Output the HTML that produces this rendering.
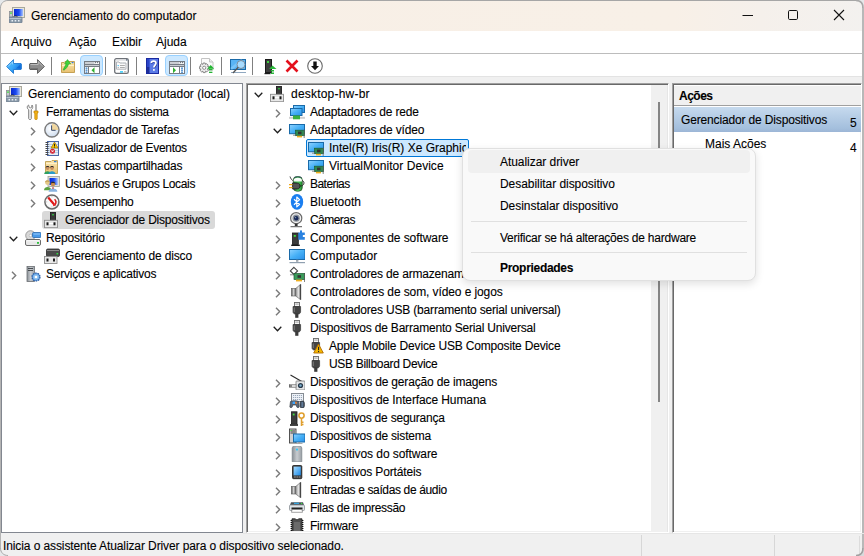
<!DOCTYPE html>
<html><head><meta charset="utf-8"><style>
*{box-sizing:border-box}
html,body{margin:0;padding:0}
body{width:864px;height:556px;overflow:hidden;position:relative;background:#f0f0f0;font-family:"Liberation Sans",sans-serif;font-size:12px;color:#000}
.a{position:absolute;display:block}
.t{position:absolute;white-space:nowrap;line-height:18px;height:18px;-webkit-text-stroke:0.1px #000}
</style></head><body>

<svg width="0" height="0" style="position:absolute">
<defs>
<linearGradient id="gScreen" x1="0" y1="0" x2="1" y2="1"><stop offset="0" stop-color="#8fd2ff"/><stop offset="0.5" stop-color="#46b0f6"/><stop offset="1" stop-color="#2a8ee8"/></linearGradient>
<linearGradient id="gDeepScreen" x1="0" y1="0" x2="1" y2="0"><stop offset="0" stop-color="#0a2ad0"/><stop offset="0.55" stop-color="#1a4af0"/><stop offset="1" stop-color="#a8c4ff"/></linearGradient>
<linearGradient id="gGray" x1="0" y1="0" x2="1" y2="0"><stop offset="0" stop-color="#8a9096"/><stop offset="0.5" stop-color="#c8ccd0"/><stop offset="1" stop-color="#9aa0a6"/></linearGradient>
<linearGradient id="gSpeaker" x1="0" y1="0" x2="1" y2="0"><stop offset="0" stop-color="#4a4a4a"/><stop offset="0.45" stop-color="#d4d4d4"/><stop offset="1" stop-color="#6a6a6a"/></linearGradient><linearGradient id="gCone" x1="0" y1="0" x2="1" y2="0"><stop offset="0" stop-color="#9a9a9a"/><stop offset="0.6" stop-color="#e8e8e8"/><stop offset="1" stop-color="#707070"/></linearGradient>
<linearGradient id="gBlue" x1="0" y1="0" x2="1" y2="1"><stop offset="0" stop-color="#a8dcff"/><stop offset="1" stop-color="#1a8ae8"/></linearGradient>
<linearGradient id="gFolder" x1="0" y1="0" x2="0" y2="1"><stop offset="0" stop-color="#fbe7b0"/><stop offset="1" stop-color="#e8c070"/></linearGradient>
<linearGradient id="gArrowB" x1="0" y1="0" x2="1" y2="0.6"><stop offset="0" stop-color="#5ac0ff"/><stop offset="0.55" stop-color="#3aa8f8"/><stop offset="1" stop-color="#1070e0"/></linearGradient>
<linearGradient id="gArrowG" x1="0" y1="0" x2="0" y2="1"><stop offset="0" stop-color="#b0b0b0"/><stop offset="1" stop-color="#6a6a6a"/></linearGradient>
<radialGradient id="gClock" cx="0.4" cy="0.4" r="0.7"><stop offset="0" stop-color="#ffffff"/><stop offset="1" stop-color="#c8d8ec"/></radialGradient>
<linearGradient id="gBatt" x1="0" y1="0" x2="1" y2="0"><stop offset="0" stop-color="#1a8a2a"/><stop offset="0.5" stop-color="#5ad86a"/><stop offset="1" stop-color="#1a8a2a"/></linearGradient>
</defs></svg>
<div class="a" style="left:0;top:0;width:864px;height:31px;background:linear-gradient(90deg,#f8efe6 0%,#f8f0e7 78%,#f5f0eb 88%,#f3f1ef 100%)"></div>
<div class="a" style="left:0;top:0;width:864px;height:1px;background:#a6a6a6"></div>
<svg class="a" style="left:9px;top:7px" width="16" height="16" viewBox="0 0 16 16">
<rect x="3.5" y="0.5" width="12" height="10" fill="#e8e6dc" stroke="#a8a89c"/>
<rect x="5" y="2" width="9" height="7" fill="url(#gDeepScreen)"/>
<rect x="0.5" y="4.5" width="3" height="6" fill="#c4c8cc" stroke="#8a8e92" stroke-width="0.8"/>
<rect x="1" y="5.5" width="2" height="1.2" fill="#40e040"/>
<path d="M4 10.5 C5 8.5 8 8.5 9 10.5" fill="none" stroke="#222" stroke-width="1"/>
<rect x="0" y="10" width="13" height="6" rx="1" fill="#8a9aaa" stroke="#6a7a8a" stroke-width="0.8"/>
<path d="M0.5 11.5 H12.5" stroke="#b8c4d0" stroke-width="1"/>
<rect x="2.5" y="13" width="1.5" height="1.5" fill="#e8eef4"/><rect x="5.7" y="13" width="1.5" height="1.5" fill="#e8eef4"/><rect x="9" y="13" width="1.5" height="1.5" fill="#e8eef4"/>
</svg>
<div class="t" style="left:31px;top:7px">Gerenciamento do computador</div>
<svg class="a" style="left:740px;top:8px" width="110" height="16" viewBox="0 0 110 16"><line x1="2.5" y1="7.5" x2="13" y2="7.5" stroke="#111" stroke-width="1"/><rect x="48.5" y="2.5" width="9" height="9" rx="1.2" fill="none" stroke="#111" stroke-width="1"/><path d="M94 2 L104 12 M104 2 L94 12" stroke="#111" stroke-width="1.1"/></svg>
<div class="a" style="left:0;top:31px;width:864px;height:22px;background:#fff"></div>
<div class="a" style="left:0;top:53px;width:864px;height:1px;background:#bcbcbc"></div>
<div class="t" style="left:11px;top:33px">Arquivo</div>
<div class="t" style="left:69px;top:33px">Ação</div>
<div class="t" style="left:112px;top:33px">Exibir</div>
<div class="t" style="left:156px;top:33px">Ajuda</div>
<div class="a" style="left:0;top:54px;width:864px;height:22px;background:#fff"></div>
<div class="a" style="left:0;top:76px;width:864px;height:1px;background:#e3e3e3"></div>
<div class="a" style="left:80px;top:55px;width:23px;height:21px;background:#cce8ff;border:1px solid #99d1ff;border-radius:4px"></div>
<div class="a" style="left:165px;top:55px;width:23px;height:21px;background:#cce8ff;border:1px solid #99d1ff;border-radius:4px"></div>
<div class="a" style="left:51px;top:57px;width:1px;height:18px;background:#808080"></div>
<div class="a" style="left:105px;top:57px;width:1px;height:18px;background:#808080"></div>
<div class="a" style="left:136px;top:57px;width:1px;height:18px;background:#808080"></div>
<div class="a" style="left:190px;top:57px;width:1px;height:18px;background:#808080"></div>
<div class="a" style="left:221px;top:57px;width:1px;height:18px;background:#808080"></div>
<div class="a" style="left:252px;top:57px;width:1px;height:18px;background:#808080"></div>
<svg class="a" style="left:6px;top:59px" width="16" height="15" viewBox="0 0 16 15">
<path d="M0.6 7.5 L7.5 0.6 V4.5 H15 L15.4 5 V10 L15 10.5 H7.5 V14.4Z" fill="url(#gArrowB)" stroke="#1e78d0" stroke-width="0.9" stroke-linejoin="round"/>
<path d="M2 7.5 L6.6 2.8 V5.4" fill="none" stroke="#a8e0ff" stroke-width="0.8"/>
<path d="M10 9.6 H14.4 V5.6 Z" fill="#0a62d0" opacity="0.8"/>
</svg>
<svg class="a" style="left:29px;top:59px" width="16" height="15" viewBox="0 0 16 15">
<path d="M15.4 7.5 L8.5 0.6 V4.5 H1 L0.6 5 V10 L1 10.5 H8.5 V14.4Z" fill="#8e8e8e" stroke="#555" stroke-width="0.9" stroke-linejoin="round"/>
<path d="M1.5 5.5 H9.2 V2.6 L14 7.5" fill="none" stroke="#c8c8c8" stroke-width="0.8"/>
<path d="M1.5 9.5 H9" stroke="#6e6e6e" stroke-width="0.8"/>
</svg>
<svg class="a" style="left:61px;top:59px" width="14" height="15" viewBox="0 0 14 15">
<path d="M0.5 3.5 H3 L4 2.5 H13.5 V13.5 H0.5Z" fill="url(#gFolder)" stroke="#c09a48" stroke-width="0.9"/>
<path d="M1 6.5 H13" stroke="#fff2c8" stroke-width="1"/>
<rect x="10.5" y="3" width="2.2" height="1.2" rx="0.6" fill="#3a80e0"/>
<path d="M2.2 10.8 C3.2 8.5 4.5 6.5 5.2 4.6 L3.6 4.4 L6.5 0.6 L9.6 4.8 L7.6 4.8 C7 7.5 5 9.8 3 11.2Z" fill="#3ed33a" stroke="#22a020" stroke-width="0.6" stroke-linejoin="round"/>
</svg>
<svg class="a" style="left:84px;top:61px" width="16" height="14" viewBox="0 0 16 14">
<rect x="0.5" y="0.5" width="15" height="12" fill="#fff" stroke="#767c84"/>
<rect x="1" y="1" width="14" height="2" fill="#fff"/>
<rect x="1" y="1.5" width="9.5" height="1" fill="#9aa0a8"/>
<rect x="11" y="1" width="1.2" height="1.2" fill="#767c84"/><rect x="13" y="1" width="1.2" height="1.2" fill="#767c84"/>
<rect x="1" y="3" width="14" height="1" fill="#767c84"/>
<rect x="1" y="4" width="14" height="1" fill="#c8ccd2"/>
<rect x="1" y="5" width="14" height="1" fill="#767c84"/>
<rect x="4" y="6" width="1" height="7" fill="#767c84"/>
<rect x="1.5" y="6.6" width="2" height="1.1" rx="0.5" fill="#2a7ac8"/><rect x="1.5" y="8.6" width="2" height="1.1" rx="0.5" fill="#2a7ac8"/><rect x="1.5" y="10.6" width="2" height="1.1" rx="0.5" fill="#2a7ac8"/>
<path d="M7.5 9.2 L10.5 6.2 V12.2Z" fill="#30b030"/>
</svg>
<svg class="a" style="left:114px;top:58px" width="15" height="16" viewBox="0 0 15 16">
<rect x="0.7" y="0.7" width="13.6" height="14.6" rx="1.6" fill="#fff" stroke="#6e7278" stroke-width="1.3"/>
<rect x="1.5" y="1.6" width="11" height="1" fill="#d8dadc"/>
<rect x="12" y="1.2" width="1.4" height="1.4" fill="#5a6a80"/>
<path d="M2.5 4 H5 L5.8 5 H12 V11.2 H2.5Z" fill="#fafafa" stroke="#a8acb2" stroke-width="0.9"/>
<rect x="6.2" y="4.6" width="1.8" height="0.9" fill="#c8ccd0"/><rect x="9" y="4.6" width="1.8" height="0.9" fill="#c8ccd0"/>
<circle cx="4.2" cy="7.6" r="0.7" fill="#20b8f8"/><circle cx="4.2" cy="9.6" r="0.6" fill="#999"/>
<rect x="6" y="7.2" width="4.8" height="0.8" fill="#9a9a9a"/><rect x="6" y="9.2" width="4.8" height="0.8" fill="#9a9a9a"/>
<rect x="6" y="13.2" width="3" height="1.4" fill="#28c8f8"/>
<rect x="10" y="13.2" width="2.5" height="1.2" fill="#b8b8b8"/>
</svg>
<svg class="a" style="left:146px;top:58px" width="13" height="16" viewBox="0 0 13 16">
<rect x="0.5" y="0.5" width="12" height="15" fill="#3050d0" stroke="#1a2aa0"/>
<rect x="1" y="1" width="2.6" height="9" fill="#2a44c8"/>
<rect x="1" y="9" width="2.6" height="6" fill="#1e2e98"/>
<rect x="3.6" y="1" width="8.4" height="14" fill="#5a7ae6"/>
<path d="M5.3 5 C5.3 2.4 10 2.4 10 5 C10 7 7.9 7.2 7.9 9.6" fill="none" stroke="#2a3a90" stroke-width="1.7" transform="translate(0.5 0.5)"/>
<path d="M5.3 5 C5.3 2.4 10 2.4 10 5 C10 7 7.9 7.2 7.9 9.6" fill="none" stroke="#fff" stroke-width="1.7"/>
<rect x="7" y="11" width="1.8" height="1.8" rx="0.5" fill="#fff"/>
</svg>
<svg class="a" style="left:169px;top:61px" width="16" height="14" viewBox="0 0 16 14">
<rect x="0.5" y="0.5" width="15" height="12" fill="#fff" stroke="#767c84"/>
<rect x="1" y="1" width="14" height="2" fill="#fff"/>
<rect x="1" y="1.5" width="9.5" height="1" fill="#9aa0a8"/>
<rect x="11" y="1" width="1.2" height="1.2" fill="#767c84"/><rect x="13" y="1" width="1.2" height="1.2" fill="#767c84"/>
<rect x="1" y="3" width="14" height="1" fill="#767c84"/>
<rect x="1" y="4" width="14" height="1" fill="#c8ccd2"/>
<rect x="1" y="5" width="14" height="1" fill="#767c84"/>
<rect x="10" y="6" width="1" height="7" fill="#767c84"/>
<rect x="12" y="6.6" width="2" height="1.1" rx="0.5" fill="#2a7ac8"/><rect x="12" y="8.6" width="2" height="1.1" rx="0.5" fill="#2a7ac8"/><rect x="12" y="10.6" width="2" height="1.1" rx="0.5" fill="#2a7ac8"/>
<path d="M4 6.2 L7 9.2 L4 12.2Z" fill="#30b030"/>
</svg>
<svg class="a" style="left:199px;top:58px" width="16" height="16" viewBox="0 0 16 16">
<path d="M2.5 0.5 H10.5 L14 4 V12 H2.5Z" fill="#fbfbfb" stroke="#c4c4c4"/>
<path d="M10.5 0.5 V4 H14" fill="#eee" stroke="#c4c4c4"/>
<g transform="translate(5.2 10)">
<path d="M-1 -5 H1 L1.3 -3.6 L2.6 -4.3 L4 -2.9 L3.3 -1.6 L4.8 -1.3 V0.8 L3.3 1.1 L4 2.5 L2.6 3.9 L1.3 3.2 L1 4.6 H-1 L-1.3 3.2 L-2.6 3.9 L-4 2.5 L-3.3 1.1 L-4.8 0.8 V-1.3 L-3.3 -1.6 L-4 -2.9 L-2.6 -4.3 L-1.3 -3.6Z" fill="#ececec" stroke="#7a7a7a" stroke-width="0.9" stroke-linejoin="round"/>
<circle cx="0" cy="-0.2" r="1.6" fill="#fff" stroke="#7a7a7a" stroke-width="0.8"/>
</g>
<path d="M8.2 10.8 L11.7 7 L15.2 10.8Z" fill="#22b432"/>
<rect x="10" y="11" width="3.4" height="1.3" fill="#22b432"/>
<rect x="10" y="13.7" width="3.4" height="1.3" fill="#22b432"/>
</svg>
<svg class="a" style="left:230px;top:59px" width="16" height="15" viewBox="0 0 16 15">
<rect x="0.5" y="0.5" width="15" height="10" fill="#5ab4f4" stroke="#1a6aa8"/>
<path d="M1 10 L12 1" stroke="#9ad6ff" stroke-width="2.5" opacity="0.5"/>
<rect x="1" y="13" width="15" height="1" fill="#90a8c0"/>
<circle cx="11" cy="5.5" r="4" fill="#a8dcff" stroke="#7a8a9a" stroke-width="1"/>
<path d="M8.2 8.3 L3 14" stroke="#555" stroke-width="1.3"/>
</svg>
<svg class="a" style="left:264px;top:59px" width="13" height="16" viewBox="0 0 13 16">
<rect x="1.5" y="0.5" width="6" height="13" fill="#3c3c3c" stroke="#1a1a1a"/>
<rect x="3" y="2" width="2" height="2" fill="#40d040"/>
<rect x="0.5" y="14" width="6" height="1.2" fill="#1a1a1a"/>
<path d="M5 10 L8.5 6.5 L12.5 10Z" fill="#2ab83a"/>
<rect x="7" y="11" width="3" height="1.5" fill="#2ab83a"/>
<rect x="7" y="13.5" width="3" height="1.5" fill="#2ab83a"/>
</svg>
<svg class="a" style="left:285px;top:59px" width="14" height="14" viewBox="0 0 14 14">
<path d="M1.5 1.5 L12.5 12.5 M12.5 1.5 L1.5 12.5" stroke="#e4101c" stroke-width="2.6"/>
</svg>
<svg class="a" style="left:307px;top:58px" width="16" height="16" viewBox="0 0 16 16">
<circle cx="8" cy="8" r="7.3" fill="#fff" stroke="#6a6a6a" stroke-width="1.1"/>
<path d="M6.3 3.5 H9.7 V8 H12 L8 12.3 L4 8 H6.3Z" fill="#111"/>
</svg>
<div class="a" style="left:1px;top:83px;width:242px;height:450px;background:#fff;border:1px solid #828790"></div>
<div class="a" style="left:246px;top:83px;width:423px;height:450px;background:#fff;border-top:1px solid #a0a0a0;border-left:1px solid #a0a0a0;border-right:1px solid #fff;border-bottom:1px solid #fff;box-shadow:inset 1px 1px 0 #696969, inset -1px 0 0 #e6e6e6, inset 0 -1px 0 #f0f0f0"></div>
<div class="a" style="left:651px;top:85px;width:16px;height:446px;background:#f0f0f0"></div>
<div class="a" style="left:658px;top:102px;width:2px;height:300px;background:#858585"></div>
<div class="a" style="left:672px;top:83px;width:190px;height:450px;background:#fff;border-top:1px solid #a0a0a0;border-left:1px solid #a0a0a0;border-right:1px solid #fff;border-bottom:1px solid #fff;box-shadow:inset 1px 1px 0 #696969, inset -1px -1px 0 #f0f0f0"></div>
<div class="a" style="left:674px;top:85px;width:187px;height:20px;background:#f0f0f0;border-top:1px solid #fff"></div>
<div class="a" style="left:674px;top:105px;width:187px;height:1px;background:#a0a0a0"></div>
<div class="a" style="left:674px;top:106px;width:187px;height:1px;background:#fff"></div>
<div class="a" style="left:674px;top:107px;width:187px;height:25px;background:linear-gradient(#c6daee,#a4bfdd 85%,#9cb6d6)"></div>
<div class="t" style="left:679px;top:87px;font-weight:bold;letter-spacing:-0.5px">Ações</div>
<div class="t" style="left:681px;top:111px;letter-spacing:-0.15px">Gerenciador de Dispositivos</div>
<div class="t" style="left:850px;top:114px">5</div>
<div class="t" style="left:705px;top:135px">Mais Ações</div>
<div class="t" style="left:850px;top:139px">4</div>
<div class="a" style="left:862px;top:0;width:2px;height:556px;background:#b8b8b8"></div>
<div class="a" style="left:0;top:0;width:1px;height:556px;background:#b4b4b4"></div>
<div class="a" style="left:859px;top:536px;width:1px;height:20px;background:#dcdcdc"></div>
<svg class="a" style="left:0;top:0" width="8" height="8"><path d="M0 0 H8 V0.5 C3.5 0.5 0.5 3.5 0.5 8 H0Z" fill="#e6e8ea"/><path d="M0.5 8 C0.5 3.5 3.5 0.5 8 0.5" fill="none" stroke="#a8a8a8" stroke-width="1"/></svg>
<svg class="a" style="left:856px;top:0" width="8" height="8"><path d="M8 0 H0 V0.5 C4.5 0.5 7 3.5 7 8 H8Z" fill="#e6e8ea"/><path d="M0 0.5 C4.5 0.5 7 3.5 7 8" fill="none" stroke="#a8a8a8" stroke-width="1.6"/></svg>
<svg class="a" style="left:0;top:548px" width="8" height="8"><path d="M0 8 H8 V7.5 C3.5 7.5 0.5 4.5 0.5 0 H0Z" fill="#e6e8ea"/><path d="M0.5 0 C0.5 4.5 3.5 7.5 8 7.5" fill="none" stroke="#a8a8a8" stroke-width="1"/></svg>
<svg class="a" style="left:856px;top:548px" width="8" height="8"><path d="M8 8 H0 V7.5 C4.5 7.5 7 4.5 7 0 H8Z" fill="#d8dadc"/><path d="M0 7.5 C4.5 7.5 7 4.5 7 0" fill="none" stroke="#a0a0a0" stroke-width="1.6"/></svg>
<div class="a" style="left:243px;top:533px;width:621px;height:1px;background:#e6e6e6"></div>
<div class="a" style="left:641px;top:535px;width:1px;height:21px;background:#d7d7d7"></div>
<div class="a" style="left:774px;top:535px;width:1px;height:21px;background:#d7d7d7"></div>
<div class="t" style="left:3px;top:537px;letter-spacing:-0.1px">Inicia o assistente Atualizar Driver para o dispositivo selecionado.</div>
<div class="a" style="left:42px;top:211px;width:173px;height:18px;background:#d9d9d9;border-radius:3px"></div>
<svg class="a" style="left:6px;top:86px" width="16" height="16" viewBox="0 0 16 16">
<rect x="3.5" y="0.5" width="12" height="10" fill="#e8e6dc" stroke="#a8a89c"/>
<rect x="5" y="2" width="9" height="7" fill="url(#gDeepScreen)"/>
<rect x="0.5" y="4.5" width="3" height="6" fill="#c4c8cc" stroke="#8a8e92" stroke-width="0.8"/>
<rect x="1" y="5.5" width="2" height="1.2" fill="#40e040"/>
<path d="M4 10.5 C5 8.5 8 8.5 9 10.5" fill="none" stroke="#222" stroke-width="1"/>
<rect x="0" y="10" width="13" height="6" rx="1" fill="#8a9aaa" stroke="#6a7a8a" stroke-width="0.8"/>
<path d="M0.5 11.5 H12.5" stroke="#b8c4d0" stroke-width="1"/>
<rect x="2.5" y="13" width="1.5" height="1.5" fill="#e8eef4"/><rect x="5.7" y="13" width="1.5" height="1.5" fill="#e8eef4"/><rect x="9" y="13" width="1.5" height="1.5" fill="#e8eef4"/>
</svg>
<div class="t" style="left:28px;top:85px;letter-spacing:0.017px">Gerenciamento do computador (local)</div>
<svg class="a" style="left:9.0px;top:110px" width="9" height="6" viewBox="0 0 9 6"><path d="M0.7 0.8 L4.5 4.7 L8.3 0.8" fill="none" stroke="#202020" stroke-width="1.3"/></svg>
<svg class="a" style="left:25px;top:104px" width="16" height="16" viewBox="0 0 16 16">
<path d="M3.6 1 C2 1.6 1.7 4 3 5.2 L3.6 5.6 V14.6 C3.6 15.8 6.4 15.8 6.4 14.6 V5.6 C7.9 4.8 8.2 2.3 7 1 L6.6 3.4 L5.4 3.8 L4.2 3.3 Z" fill="#f6f6f6" stroke="#7e7e7e" stroke-width="0.9" stroke-linejoin="round"/>
<path d="M5 6.2 V14.2" stroke="#c4c4c4" stroke-width="0.9"/>
<rect x="10.4" y="0.2" width="1.2" height="7" fill="#7e7e7e"/>
<path d="M9 7 H13 V9 H12.2 V14.8 C12.2 16 9.8 16 9.8 14.8 V9 H9Z" fill="#f2b418" stroke="#c08000" stroke-width="0.7"/>
</svg>
<div class="t" style="left:46px;top:103px;letter-spacing:-0.303px">Ferramentas do sistema</div>
<svg class="a" style="left:30.0px;top:126.5px" width="6" height="9" viewBox="0 0 6 9"><path d="M1 0.7 L4.7 4.5 L1 8.3" fill="none" stroke="#7a7a7a" stroke-width="1.4"/></svg>
<svg class="a" style="left:44px;top:122px" width="16" height="16" viewBox="0 0 16 16">
<circle cx="7.9" cy="7.9" r="7.1" fill="url(#gClock)" stroke="#7a7a7a" stroke-width="1.4"/>
<path d="M7.9 1.6 A6.3 6.3 0 0 1 14.2 7.9 L7.9 7.9Z" fill="#f2d494" opacity="0.9"/>
<path d="M7.6 3.4 V8.3 H11.6" fill="none" stroke="#3a4a6a" stroke-width="1"/>
</svg>
<div class="t" style="left:65px;top:121px;letter-spacing:-0.193px">Agendador de Tarefas</div>
<svg class="a" style="left:30.0px;top:144.5px" width="6" height="9" viewBox="0 0 6 9"><path d="M1 0.7 L4.7 4.5 L1 8.3" fill="none" stroke="#7a7a7a" stroke-width="1.4"/></svg>
<svg class="a" style="left:44px;top:140px" width="16" height="16" viewBox="0 0 16 16">
<rect x="3.5" y="1.5" width="11" height="14" fill="#e4ecf6" stroke="#4a68a8"/>
<path d="M4 4.5h10M4 6.5h10M4 8.5h10M4 10.5h10M4 12.5h10" stroke="#b8cce4" stroke-width="1"/>
<rect x="1.5" y="2" width="3" height="1" fill="#444"/><rect x="1.5" y="4" width="3" height="1" fill="#444"/><rect x="1.5" y="6" width="3" height="1" fill="#444"/><rect x="1.5" y="8" width="3" height="1" fill="#444"/><rect x="1.5" y="10" width="3" height="1" fill="#444"/><rect x="1.5" y="12" width="3" height="1" fill="#444"/><rect x="1.5" y="14" width="3" height="1" fill="#444"/>
<path d="M10.5 2 L14 8 H7Z" fill="#f8c800" stroke="#a07000" stroke-width="0.7" stroke-linejoin="round"/>
<rect x="10" y="3.8" width="1" height="2.4" fill="#222"/><rect x="10" y="6.6" width="1" height="0.9" fill="#222"/>
<circle cx="8.5" cy="11.2" r="2.5" fill="#d42030"/>
<path d="M7.5 10.2l2 2M9.5 10.2l-2 2" stroke="#fff" stroke-width="0.9"/>
</svg>
<div class="t" style="left:65px;top:139px;letter-spacing:-0.292px">Visualizador de Eventos</div>
<svg class="a" style="left:30.0px;top:162.5px" width="6" height="9" viewBox="0 0 6 9"><path d="M1 0.7 L4.7 4.5 L1 8.3" fill="none" stroke="#7a7a7a" stroke-width="1.4"/></svg>
<svg class="a" style="left:44px;top:158px" width="16" height="16" viewBox="0 0 16 16">
<path d="M1.5 3.5 H7 L8 2.5 H13.5 V15.5 H1.5Z" fill="url(#gFolder)" stroke="#c0a050" stroke-width="0.9"/>
<path d="M2 5.5 H13" stroke="#fff0c8" stroke-width="1"/>
<rect x="10" y="3" width="2.5" height="1.2" fill="#3a80d0"/>
<circle cx="3.6" cy="10" r="1.9" fill="#c89060"/><path d="M1.6 9.8 C1.6 7.4 5.6 7.4 5.6 9.8 C5 8.8 2.2 8.8 1.6 9.8Z" fill="#2a2a2a"/>
<path d="M0.2 16 C0.2 12.2 7 12.2 7 16Z" fill="#30a060"/>
<circle cx="8" cy="10" r="1.9" fill="#c89060"/><path d="M6 9.8 C6 7.4 10 7.4 10 9.8 C9.4 8.8 6.6 8.8 6 9.8Z" fill="#2a2a2a"/>
<path d="M4.6 16 C4.6 12.2 11.4 12.2 11.4 16Z" fill="#2a9ac8"/>
</svg>
<div class="t" style="left:65px;top:157px;letter-spacing:-0.194px">Pastas compartilhadas</div>
<svg class="a" style="left:30.0px;top:180.5px" width="6" height="9" viewBox="0 0 6 9"><path d="M1 0.7 L4.7 4.5 L1 8.3" fill="none" stroke="#7a7a7a" stroke-width="1.4"/></svg>
<svg class="a" style="left:44px;top:176px" width="16" height="16" viewBox="0 0 16 16">
<rect x="4" y="0.5" width="11.4" height="10" fill="#e0e0d8" stroke="#a0a098" stroke-width="0.8"/>
<rect x="5.5" y="2" width="8.4" height="7" fill="url(#gDeepScreen)"/>
<circle cx="3.4" cy="6.6" r="2.3" fill="#e4c888"/><path d="M1.1 6.4 C1.2 3.8 5.6 3.8 5.7 6.4 C5 5.2 1.8 5.2 1.1 6.4Z" fill="#b89040"/>
<path d="M0 14.2 C0 10 7.2 10 7.2 14.2Z" fill="#5aa040"/>
<circle cx="9" cy="8" r="2.3" fill="#c88c50"/><path d="M6.7 7.8 C6.8 5.2 11.2 5.2 11.3 7.8 C10.6 6.6 7.4 6.6 6.7 7.8Z" fill="#2a2a2a"/>
<path d="M4.6 15.8 C4.6 11.4 13.4 11.4 13.4 15.8Z" fill="#8ab4e0"/>
<path d="M9 11 V13" stroke="#c02020" stroke-width="1"/>
</svg>
<div class="t" style="left:65px;top:175px;letter-spacing:-0.332px">Usuários e Grupos Locais</div>
<svg class="a" style="left:30.0px;top:198.5px" width="6" height="9" viewBox="0 0 6 9"><path d="M1 0.7 L4.7 4.5 L1 8.3" fill="none" stroke="#7a7a7a" stroke-width="1.4"/></svg>
<svg class="a" style="left:44px;top:194px" width="16" height="16" viewBox="0 0 16 16">
<circle cx="7.9" cy="7.9" r="7" fill="#fafafa" stroke="#6a6a6a" stroke-width="1.5"/>
<path d="M3.2 7.9 H2.4M4.3 4.3 L3.7 3.7M7.9 3.2 V2.4M13.4 7.9 H12.6M11.5 11.5 L12.1 12.1M7.9 12.6 V13.4" stroke="#888" stroke-width="0.7"/>
<path d="M4.2 3.6 L10.2 10.4" stroke="#e01818" stroke-width="2.2"/>
<path d="M10.6 5.2 C12 6.6 12.2 9 11 10.8 L9.2 11.6" fill="none" stroke="#e01818" stroke-width="1.5"/>
</svg>
<div class="t" style="left:65px;top:193px;letter-spacing:-0.292px">Desempenho</div>
<svg class="a" style="left:44px;top:212px" width="16" height="16" viewBox="0 0 16 16">
<rect x="6.5" y="0.5" width="5" height="8" fill="#3a3a3a" stroke="#1e1e1e" stroke-width="0.9"/>
<rect x="8.3" y="2" width="1.4" height="1.4" fill="#30e040"/>
<rect x="0.5" y="8.3" width="13" height="7.4" fill="#e8e8e8" stroke="#8e8e8e" stroke-width="0.9"/>
<rect x="2.5" y="10.3" width="2" height="3" fill="#1a1a1a"/>
<rect x="9.5" y="10.3" width="2" height="3" fill="#1a1a1a"/>
<path d="M5 11.5 H9" stroke="#fff" stroke-width="1"/>
</svg>
<div class="t" style="left:65px;top:211px;letter-spacing:-0.195px">Gerenciador de Dispositivos</div>
<svg class="a" style="left:9.0px;top:236px" width="9" height="6" viewBox="0 0 9 6"><path d="M0.7 0.8 L4.5 4.7 L8.3 0.8" fill="none" stroke="#202020" stroke-width="1.3"/></svg>
<svg class="a" style="left:25px;top:230px" width="16" height="16" viewBox="0 0 16 16">
<circle cx="5.5" cy="5.5" r="4.8" fill="#d8d8d8" stroke="#8a8a8a" stroke-width="0.8"/>
<circle cx="5.5" cy="5.5" r="1.3" fill="#fff" stroke="#999" stroke-width="0.5"/>
<rect x="7.5" y="2.5" width="8.5" height="5" rx="1" fill="#4a9ae8" stroke="#2a6ab0" stroke-width="0.8"/>
<path d="M8.5 4 H15" stroke="#a8d4ff" stroke-width="0.8"/>
<rect x="0.5" y="9.5" width="15" height="6" rx="1.5" fill="#e8e8e8" stroke="#6a6a6a"/>
<path d="M1 10.8 H15" stroke="#fff" stroke-width="0.8"/>
<rect x="12" y="12" width="2" height="1.8" fill="#30c040"/>
</svg>
<div class="t" style="left:46px;top:229px;letter-spacing:-0.174px">Repositório</div>
<svg class="a" style="left:44px;top:248px" width="16" height="16" viewBox="0 0 16 16">
<rect x="2.5" y="1" width="13" height="7.5" rx="1.2" fill="#4a4a4a" stroke="#2a2a2a" stroke-width="0.8"/>
<path d="M3 2.5 H15" stroke="#8a8a8a" stroke-width="1"/>
<rect x="12.5" y="5" width="1.6" height="1.4" fill="#30e040"/>
<rect x="0.5" y="8.5" width="12.5" height="7" fill="#e8e8e8" stroke="#8e8e8e" stroke-width="0.9"/>
<rect x="2.5" y="10.5" width="2" height="3" fill="#1a1a1a"/>
<rect x="9" y="10.5" width="2" height="3" fill="#1a1a1a"/>
</svg>
<div class="t" style="left:65px;top:247px;letter-spacing:-0.141px">Gerenciamento de disco</div>
<svg class="a" style="left:11.0px;top:270.5px" width="6" height="9" viewBox="0 0 6 9"><path d="M1 0.7 L4.7 4.5 L1 8.3" fill="none" stroke="#7a7a7a" stroke-width="1.4"/></svg>
<svg class="a" style="left:25px;top:266px" width="16" height="16" viewBox="0 0 16 16">
<rect x="2" y="0.5" width="7.4" height="15" fill="url(#gGray)" stroke="#6a6e72" stroke-width="0.8"/>
<path d="M3 2.5h5M3 4.5h5" stroke="#3a3e42" stroke-width="0.9"/>
<circle cx="11" cy="11" r="4" fill="#5a9ae0" stroke="#2a5aa0" stroke-width="1.2" stroke-dasharray="1.5 1"/>
<circle cx="11" cy="11" r="2.8" fill="#8ac0f0"/>
<circle cx="11" cy="11" r="1.3" fill="#fff"/>
</svg>
<div class="t" style="left:46px;top:265px;letter-spacing:-0.236px">Serviços e aplicativos</div>
<div class="a" style="left:306px;top:139px;width:163px;height:18px;background:#cce8ff;border:1px solid #0078d7;border-radius:2px"></div>
<div class="a" style="left:248px;top:85px;width:403px;height:446px;overflow:hidden">
<div class="a" style="left:-248px;top:-85px;width:864px;height:556px">
<svg class="a" style="left:254.0px;top:92px" width="9" height="6" viewBox="0 0 9 6"><path d="M0.7 0.8 L4.5 4.7 L8.3 0.8" fill="none" stroke="#202020" stroke-width="1.3"/></svg>
<svg class="a" style="left:270px;top:86px" width="16" height="16" viewBox="0 0 16 16">
<rect x="6.5" y="0.5" width="5" height="8" fill="#3a3a3a" stroke="#1e1e1e" stroke-width="0.9"/>
<rect x="8.3" y="2" width="1.4" height="1.4" fill="#30e040"/>
<rect x="0.5" y="8.3" width="13" height="7.4" fill="#e8e8e8" stroke="#8e8e8e" stroke-width="0.9"/>
<rect x="2.5" y="10.3" width="2" height="3" fill="#1a1a1a"/>
<rect x="9.5" y="10.3" width="2" height="3" fill="#1a1a1a"/>
<path d="M5 11.5 H9" stroke="#fff" stroke-width="1"/>
</svg>
<div class="t" style="left:291px;top:85px;letter-spacing:0.206px">desktop-hw-br</div>
<svg class="a" style="left:275.0px;top:108.5px" width="6" height="9" viewBox="0 0 6 9"><path d="M1 0.7 L4.7 4.5 L1 8.3" fill="none" stroke="#7a7a7a" stroke-width="1.4"/></svg>
<svg class="a" style="left:289px;top:104px" width="16" height="16" viewBox="0 0 16 16">
<rect x="4.5" y="1.5" width="11" height="7" fill="url(#gScreen)" stroke="#1a6aa8"/>
<rect x="1.5" y="4.5" width="11.5" height="7" fill="url(#gScreen)" stroke="#1a6aa8"/>
<rect x="0" y="12.8" width="16" height="2" fill="#d0d0d0"/>
<rect x="4" y="11.5" width="7" height="3.8" fill="#3ab040"/>
</svg>
<div class="t" style="left:310px;top:103px;letter-spacing:-0.175px">Adaptadores de rede</div>
<svg class="a" style="left:273.0px;top:128px" width="9" height="6" viewBox="0 0 9 6"><path d="M0.7 0.8 L4.5 4.7 L8.3 0.8" fill="none" stroke="#202020" stroke-width="1.3"/></svg>
<svg class="a" style="left:289px;top:122px" width="16" height="16" viewBox="0 0 16 16">
<rect x="0.5" y="2.5" width="15" height="9.2" fill="url(#gScreen)" stroke="#1a6aa8"/>
<rect x="6.6" y="8.2" width="8.9" height="5.5" fill="#2e8a50" stroke="#1a5a30" stroke-width="0.7"/>
<rect x="9" y="9.6" width="3.5" height="2.6" fill="#333"/>
<rect x="8" y="13.8" width="5" height="1.6" fill="#f0b020"/>
<path d="M15.2 8 V16" stroke="#666" stroke-width="0.8"/>
<path d="M4 13.2 H7" stroke="#777" stroke-width="0.8"/>
</svg>
<div class="t" style="left:310px;top:121px;letter-spacing:-0.157px">Adaptadores de vídeo</div>
<svg class="a" style="left:308px;top:140px" width="16" height="16" viewBox="0 0 16 16">
<rect x="0.5" y="2.5" width="15" height="9.2" fill="url(#gScreen)" stroke="#1a6aa8"/>
<rect x="6.6" y="8.2" width="8.9" height="5.5" fill="#2e8a50" stroke="#1a5a30" stroke-width="0.7"/>
<rect x="9" y="9.6" width="3.5" height="2.6" fill="#333"/>
<rect x="8" y="13.8" width="5" height="1.6" fill="#f0b020"/>
<path d="M15.2 8 V16" stroke="#666" stroke-width="0.8"/>
<path d="M4 13.2 H7" stroke="#777" stroke-width="0.8"/>
</svg>
<div class="t" style="left:329px;top:139px;letter-spacing:0px;width:137px;overflow:hidden">Intel(R) Iris(R) Xe Graphics</div>
<svg class="a" style="left:308px;top:158px" width="16" height="16" viewBox="0 0 16 16">
<rect x="0.5" y="2.5" width="15" height="9.2" fill="url(#gScreen)" stroke="#1a6aa8"/>
<rect x="6.6" y="8.2" width="8.9" height="5.5" fill="#2e8a50" stroke="#1a5a30" stroke-width="0.7"/>
<rect x="9" y="9.6" width="3.5" height="2.6" fill="#333"/>
<rect x="8" y="13.8" width="5" height="1.6" fill="#f0b020"/>
<path d="M15.2 8 V16" stroke="#666" stroke-width="0.8"/>
<path d="M4 13.2 H7" stroke="#777" stroke-width="0.8"/>
</svg>
<div class="t" style="left:329px;top:157px;letter-spacing:0.038px">VirtualMonitor Device</div>
<svg class="a" style="left:275.0px;top:180.5px" width="6" height="9" viewBox="0 0 6 9"><path d="M1 0.7 L4.7 4.5 L1 8.3" fill="none" stroke="#7a7a7a" stroke-width="1.4"/></svg>
<svg class="a" style="left:289px;top:176px" width="16" height="16" viewBox="0 0 16 16">
<rect x="4.3" y="0.6" width="9" height="14.6" rx="3.6" fill="url(#gBatt)" stroke="#2a4a2a" stroke-width="0.7"/>
<path d="M4.7 4 C4.7 0.9 12.9 0.9 12.9 4 V5.2 H4.7Z" fill="#fafcfa"/><path d="M4.7 5.2 H12.9" stroke="#cfe8cf" stroke-width="0.6"/>
<path d="M5 1.6 C6.5 0.6 11 0.6 12.6 1.6" fill="none" stroke="#3a4a6a" stroke-width="0.8"/>
<path d="M1 0.5 C1.6 2.6 2.8 4 4.4 5" fill="none" stroke="#333" stroke-width="0.9"/>
<path d="M3.6 7 H8.4 C10 7 11 8.4 11 10 C11 11.6 10 13 8.4 13 H3.6Z" fill="#555" stroke="#111" stroke-width="0.8"/>
<rect x="0" y="8" width="3.5" height="1.2" fill="#f0a818"/><rect x="0" y="11" width="3.5" height="1.2" fill="#f0a818"/>
<path d="M11 10 C13 10 15 9 15 7 C15 5.5 14 4.8 13 4.6" fill="none" stroke="#222" stroke-width="0.9"/>
</svg>
<div class="t" style="left:310px;top:175px;letter-spacing:-0.545px">Baterias</div>
<svg class="a" style="left:275.0px;top:198.5px" width="6" height="9" viewBox="0 0 6 9"><path d="M1 0.7 L4.7 4.5 L1 8.3" fill="none" stroke="#7a7a7a" stroke-width="1.4"/></svg>
<svg class="a" style="left:289px;top:194px" width="16" height="16" viewBox="0 0 16 16">
<ellipse cx="8" cy="7.9" rx="6.2" ry="7.9" fill="#1a7ef0"/>
<path d="M5 5.2 L10.6 10.4 L7.8 12.9 V3 L10.6 5.6 L5 10.8" fill="none" stroke="#fff" stroke-width="1.2" stroke-linejoin="round"/>
</svg>
<div class="t" style="left:310px;top:193px;letter-spacing:0.039px">Bluetooth</div>
<svg class="a" style="left:275.0px;top:216.5px" width="6" height="9" viewBox="0 0 6 9"><path d="M1 0.7 L4.7 4.5 L1 8.3" fill="none" stroke="#7a7a7a" stroke-width="1.4"/></svg>
<svg class="a" style="left:289px;top:212px" width="16" height="16" viewBox="0 0 16 16">
<circle cx="7.2" cy="6.2" r="5.6" fill="#f0f0f0" stroke="#6a6a6a" stroke-width="1.2"/>
<circle cx="7.2" cy="6.2" r="3.6" fill="#8a9098"/>
<circle cx="7.2" cy="6.2" r="2.2" fill="#1a2a5a"/>
<circle cx="6.6" cy="5.6" r="0.6" fill="#8ab"/>
<rect x="5.8" y="11.6" width="2.8" height="2.4" fill="#333"/>
<rect x="1.5" y="14.2" width="11.5" height="1" fill="#555"/>
</svg>
<div class="t" style="left:310px;top:211px;letter-spacing:-0.548px">Câmeras</div>
<svg class="a" style="left:275.0px;top:234.5px" width="6" height="9" viewBox="0 0 6 9"><path d="M1 0.7 L4.7 4.5 L1 8.3" fill="none" stroke="#7a7a7a" stroke-width="1.4"/></svg>
<svg class="a" style="left:289px;top:230px" width="16" height="16" viewBox="0 0 16 16">
<rect x="3.5" y="3" width="5.8" height="11.5" fill="#3c3c3c" stroke="#1a1a1a" stroke-width="0.8"/>
<rect x="4.8" y="5" width="2" height="1.8" fill="#40e040"/>
<path d="M2.2 15.3 H10.8" stroke="#1a1a1a" stroke-width="1.4"/>
<path d="M9.3 2.5 H11 V1.2 C11 -0.2 13 -0.2 13 1.2 V2.5 H15.8 V5 H14.6 C13.4 5 13.4 7 14.6 7 H15.8 V9.8 H9.3Z" fill="#2a82e0"/>
</svg>
<div class="t" style="left:310px;top:229px;letter-spacing:-0.07px">Componentes de software</div>
<svg class="a" style="left:275.0px;top:252.5px" width="6" height="9" viewBox="0 0 6 9"><path d="M1 0.7 L4.7 4.5 L1 8.3" fill="none" stroke="#7a7a7a" stroke-width="1.4"/></svg>
<svg class="a" style="left:289px;top:248px" width="16" height="16" viewBox="0 0 16 16">
<rect x="0.5" y="1.5" width="15.5" height="10" fill="url(#gScreen)" stroke="#1a6aa8"/>
<rect x="7" y="11.8" width="2.4" height="2" fill="#a0a8b0"/>
<rect x="0.5" y="14" width="15.5" height="1.2" fill="#90a0b0"/>
</svg>
<div class="t" style="left:310px;top:247px;letter-spacing:0.141px">Computador</div>
<svg class="a" style="left:275.0px;top:270.5px" width="6" height="9" viewBox="0 0 6 9"><path d="M1 0.7 L4.7 4.5 L1 8.3" fill="none" stroke="#7a7a7a" stroke-width="1.4"/></svg>
<svg class="a" style="left:289px;top:266px" width="16" height="16" viewBox="0 0 16 16">
<path d="M4.9 1.3 L8.6 4.9 L4.9 8.5 L1.3 4.9Z" fill="#fff" stroke="#444" stroke-width="1.1"/>
<path d="M1 8.8 H6" stroke="#666" stroke-width="0.8"/>
<rect x="5" y="7.5" width="10.8" height="6" fill="#3a9a5a" stroke="#1a5a30" stroke-width="0.7"/>
<rect x="8.5" y="9.2" width="3.5" height="2.6" fill="#333"/>
<rect x="7" y="13.6" width="6" height="1.8" fill="#f0b020"/>
<path d="M15.6 7.5 V16" stroke="#555" stroke-width="0.8"/>
</svg>
<div class="t" style="left:310px;top:265px;letter-spacing:-0.19px">Controladores de armazenamento</div>
<svg class="a" style="left:275.0px;top:288.5px" width="6" height="9" viewBox="0 0 6 9"><path d="M1 0.7 L4.7 4.5 L1 8.3" fill="none" stroke="#7a7a7a" stroke-width="1.4"/></svg>
<svg class="a" style="left:289px;top:284px" width="16" height="16" viewBox="0 0 16 16">
<rect x="2.5" y="4.5" width="4.2" height="7.5" fill="url(#gSpeaker)" stroke="#5a5a5a" stroke-width="0.6"/>
<path d="M6.7 4.5 L11.8 0.2 V15.8 L6.7 12Z" fill="url(#gCone)" stroke="#5a5a5a" stroke-width="0.6"/>
<path d="M11.4 0.6 V15.4" stroke="#444" stroke-width="1.1"/>
</svg>
<div class="t" style="left:310px;top:283px;letter-spacing:-0.099px">Controladores de som, vídeo e jogos</div>
<svg class="a" style="left:275.0px;top:306.5px" width="6" height="9" viewBox="0 0 6 9"><path d="M1 0.7 L4.7 4.5 L1 8.3" fill="none" stroke="#7a7a7a" stroke-width="1.4"/></svg>
<svg class="a" style="left:289px;top:302px" width="16" height="16" viewBox="0 0 16 16">
<rect x="5.5" y="0.5" width="5" height="4.2" fill="#f4f4f4" stroke="#666" stroke-width="0.9"/>
<rect x="6.6" y="1.6" width="1" height="1" fill="#666"/><rect x="8.4" y="1.6" width="1" height="1" fill="#666"/>
<path d="M4 4.5 H11.6 V9.8 C11.6 11 10.6 12 9.5 12 H6.1 C5 12 4 11 4 9.8Z" fill="#444" stroke="#2a2a2a" stroke-width="0.6"/>
<path d="M5.2 5.5 V10" stroke="#8a8a8a" stroke-width="0.9"/>
<rect x="6.2" y="12" width="3.2" height="3.8" fill="#3a3a3a"/>
</svg>
<div class="t" style="left:310px;top:301px;letter-spacing:-0.19px">Controladores USB (barramento serial universal)</div>
<svg class="a" style="left:273.0px;top:326px" width="9" height="6" viewBox="0 0 9 6"><path d="M0.7 0.8 L4.5 4.7 L8.3 0.8" fill="none" stroke="#202020" stroke-width="1.3"/></svg>
<svg class="a" style="left:289px;top:320px" width="16" height="16" viewBox="0 0 16 16">
<rect x="5.5" y="0.5" width="5" height="4.2" fill="#f4f4f4" stroke="#666" stroke-width="0.9"/>
<rect x="6.6" y="1.6" width="1" height="1" fill="#666"/><rect x="8.4" y="1.6" width="1" height="1" fill="#666"/>
<path d="M4 4.5 H11.6 V9.8 C11.6 11 10.6 12 9.5 12 H6.1 C5 12 4 11 4 9.8Z" fill="#444" stroke="#2a2a2a" stroke-width="0.6"/>
<path d="M5.2 5.5 V10" stroke="#8a8a8a" stroke-width="0.9"/>
<rect x="6.2" y="12" width="3.2" height="3.8" fill="#3a3a3a"/>
</svg>
<div class="t" style="left:310px;top:319px;letter-spacing:-0.2px">Dispositivos de Barramento Serial Universal</div>
<svg class="a" style="left:308px;top:338px" width="16" height="16" viewBox="0 0 16 16">
<rect x="5.5" y="0.5" width="5" height="4.2" fill="#f4f4f4" stroke="#666" stroke-width="0.9"/>
<rect x="6.6" y="1.6" width="1" height="1" fill="#666"/><rect x="8.4" y="1.6" width="1" height="1" fill="#666"/>
<path d="M4 4.5 H11.6 V9.8 C11.6 11 10.6 12 9.5 12 H6.1 C5 12 4 11 4 9.8Z" fill="#444" stroke="#2a2a2a" stroke-width="0.6"/>
<path d="M5.2 5.5 V10" stroke="#8a8a8a" stroke-width="0.9"/>
<path d="M10.5 6 L15.3 15 H5.7Z" fill="#f5b800" stroke="#b06a00" stroke-width="0.9" stroke-linejoin="round"/>
<rect x="10" y="8.8" width="1.1" height="3.4" fill="#222"/><rect x="10" y="13" width="1.1" height="1.1" fill="#222"/>
</svg>
<div class="t" style="left:329px;top:337px;letter-spacing:-0.167px">Apple Mobile Device USB Composite Device</div>
<svg class="a" style="left:308px;top:356px" width="16" height="16" viewBox="0 0 16 16">
<rect x="5.5" y="0.5" width="5" height="4.2" fill="#f4f4f4" stroke="#666" stroke-width="0.9"/>
<rect x="6.6" y="1.6" width="1" height="1" fill="#666"/><rect x="8.4" y="1.6" width="1" height="1" fill="#666"/>
<path d="M4 4.5 H11.6 V9.8 C11.6 11 10.6 12 9.5 12 H6.1 C5 12 4 11 4 9.8Z" fill="#444" stroke="#2a2a2a" stroke-width="0.6"/>
<path d="M5.2 5.5 V10" stroke="#8a8a8a" stroke-width="0.9"/>
<rect x="6.2" y="12" width="3.2" height="3.8" fill="#3a3a3a"/>
</svg>
<div class="t" style="left:329px;top:355px;letter-spacing:-0.317px">USB Billboard Device</div>
<svg class="a" style="left:275.0px;top:378.5px" width="6" height="9" viewBox="0 0 6 9"><path d="M1 0.7 L4.7 4.5 L1 8.3" fill="none" stroke="#7a7a7a" stroke-width="1.4"/></svg>
<svg class="a" style="left:289px;top:374px" width="16" height="16" viewBox="0 0 16 16">
<path d="M1.5 1 L14.5 8.5" stroke="#2a2a2a" stroke-width="1.1"/>
<rect x="7" y="7" width="9" height="9" rx="0.8" fill="#e4e6e8" stroke="#777" stroke-width="0.8"/>
<circle cx="11.5" cy="11.5" r="2.6" fill="#2a3a4a"/>
<circle cx="11.5" cy="11.5" r="1.2" fill="#7ab0d0"/>
<rect x="0.5" y="10.5" width="6.5" height="3" fill="#d8d8d8" stroke="#777" stroke-width="0.6"/>
<rect x="0" y="11.5" width="3" height="1" fill="#333"/>
</svg>
<div class="t" style="left:310px;top:373px;letter-spacing:-0.168px">Dispositivos de geração de imagens</div>
<svg class="a" style="left:275.0px;top:396.5px" width="6" height="9" viewBox="0 0 6 9"><path d="M1 0.7 L4.7 4.5 L1 8.3" fill="none" stroke="#7a7a7a" stroke-width="1.4"/></svg>
<svg class="a" style="left:289px;top:392px" width="16" height="16" viewBox="0 0 16 16">
<rect x="2.5" y="1.5" width="12" height="8" fill="#eef2f8" stroke="#7a8088" stroke-width="0.9"/>
<path d="M4 3.5h9M4 5.5h9M4 7.5h9" stroke="#9aa8ba" stroke-width="1" stroke-dasharray="1.2 0.8"/>
<path d="M1.5 9.5 C3 8.5 8 8.5 9.5 9.5 L10.2 15 C9.6 16 8.4 16 7.8 15 L7.2 13 H3.8 L3.2 15 C2.6 16 1.4 16 0.8 15Z" fill="#5a6878" stroke="#2a3038" stroke-width="0.6"/>
<rect x="3.6" y="9.6" width="2.6" height="2.4" fill="#40a8ff"/><rect x="6.2" y="9.8" width="1.6" height="2" fill="#f08030"/>
<rect x="11" y="9" width="4.4" height="7" rx="2" fill="#4a5868" stroke="#1a2028" stroke-width="0.6"/>
<path d="M13.2 10 V15" stroke="#7aa0d0" stroke-width="0.7"/>
</svg>
<div class="t" style="left:310px;top:391px;letter-spacing:-0.106px">Dispositivos de Interface Humana</div>
<svg class="a" style="left:275.0px;top:414.5px" width="6" height="9" viewBox="0 0 6 9"><path d="M1 0.7 L4.7 4.5 L1 8.3" fill="none" stroke="#7a7a7a" stroke-width="1.4"/></svg>
<svg class="a" style="left:289px;top:410px" width="16" height="16" viewBox="0 0 16 16">
<rect x="2.5" y="1.8" width="5.5" height="12" fill="#3c3c3c" stroke="#1a1a1a" stroke-width="0.8"/>
<rect x="3.8" y="3.6" width="1.8" height="1.8" fill="#40e040"/>
<path d="M1 15 H9" stroke="#1a1a1a" stroke-width="1.6"/>
<circle cx="12.5" cy="5.6" r="2.6" fill="none" stroke="#e0a030" stroke-width="1.6"/>
<path d="M12.5 8.2 V16 M12.5 12.2 H14.5 M12.5 14.5 H14.5" stroke="#e0a030" stroke-width="1.5"/>
</svg>
<div class="t" style="left:310px;top:409px;letter-spacing:-0.211px">Dispositivos de segurança</div>
<svg class="a" style="left:275.0px;top:432.5px" width="6" height="9" viewBox="0 0 6 9"><path d="M1 0.7 L4.7 4.5 L1 8.3" fill="none" stroke="#7a7a7a" stroke-width="1.4"/></svg>
<svg class="a" style="left:289px;top:428px" width="16" height="16" viewBox="0 0 16 16">
<rect x="0.5" y="1" width="6.5" height="14" fill="#d0d0d0" stroke="#444" stroke-width="0.9"/>
<path d="M1.5 3h4.5M1.5 5h4.5" stroke="#333" stroke-width="0.9"/>
<rect x="1.5" y="2" width="1.5" height="0.8" fill="#40e040"/>
<rect x="4.5" y="6" width="11.5" height="8" fill="url(#gScreen)" stroke="#1a6aa8"/>
<rect x="9.2" y="14" width="2" height="1.2" fill="#999"/><rect x="7" y="15.2" width="6.5" height="0.8" fill="#999"/>
</svg>
<div class="t" style="left:310px;top:427px;letter-spacing:-0.188px">Dispositivos de sistema</div>
<svg class="a" style="left:275.0px;top:450.5px" width="6" height="9" viewBox="0 0 6 9"><path d="M1 0.7 L4.7 4.5 L1 8.3" fill="none" stroke="#7a7a7a" stroke-width="1.4"/></svg>
<svg class="a" style="left:289px;top:446px" width="16" height="16" viewBox="0 0 16 16">
<path d="M3.2 2.2 Q3.2 0.2 5.2 0.2 H10.8 Q12.8 0.2 12.8 2.2 V15.8 H3.2Z" fill="url(#gGray)" stroke="#7a8288" stroke-width="0.7"/>
<circle cx="8" cy="3.6" r="1.1" fill="#30c8f8"/>
</svg>
<div class="t" style="left:310px;top:445px;letter-spacing:-0.082px">Dispositivos do software</div>
<svg class="a" style="left:275.0px;top:468.5px" width="6" height="9" viewBox="0 0 6 9"><path d="M1 0.7 L4.7 4.5 L1 8.3" fill="none" stroke="#7a7a7a" stroke-width="1.4"/></svg>
<svg class="a" style="left:289px;top:464px" width="16" height="16" viewBox="0 0 16 16">
<rect x="3.5" y="1.5" width="9.3" height="13.2" rx="1" fill="#3a3a3a" stroke="#1a1a1a" stroke-width="0.8"/>
<rect x="4.6" y="2.6" width="7.2" height="8.8" fill="url(#gBlue)"/>
<path d="M5 13 H11.5" stroke="#9a9a9a" stroke-width="1" stroke-dasharray="1.8 0.6"/>
</svg>
<div class="t" style="left:310px;top:463px;letter-spacing:-0.155px">Dispositivos Portáteis</div>
<svg class="a" style="left:275.0px;top:486.5px" width="6" height="9" viewBox="0 0 6 9"><path d="M1 0.7 L4.7 4.5 L1 8.3" fill="none" stroke="#7a7a7a" stroke-width="1.4"/></svg>
<svg class="a" style="left:289px;top:482px" width="16" height="16" viewBox="0 0 16 16">
<rect x="2.5" y="4.5" width="4.2" height="7.5" fill="url(#gSpeaker)" stroke="#5a5a5a" stroke-width="0.6"/>
<path d="M6.7 4.5 L11.8 0.2 V15.8 L6.7 12Z" fill="url(#gCone)" stroke="#5a5a5a" stroke-width="0.6"/>
<path d="M11.4 0.6 V15.4" stroke="#444" stroke-width="1.1"/>
</svg>
<div class="t" style="left:310px;top:481px;letter-spacing:-0.359px">Entradas e saídas de áudio</div>
<svg class="a" style="left:275.0px;top:504.5px" width="6" height="9" viewBox="0 0 6 9"><path d="M1 0.7 L4.7 4.5 L1 8.3" fill="none" stroke="#7a7a7a" stroke-width="1.4"/></svg>
<svg class="a" style="left:289px;top:500px" width="16" height="16" viewBox="0 0 16 16">
<path d="M2 2.3 H14 L15 5 H1Z" fill="#4a5258"/>
<rect x="5" y="2.8" width="5" height="1" fill="#30b8ff"/>
<rect x="12" y="3" width="1.2" height="1" fill="#30f030"/>
<rect x="0.5" y="5" width="15" height="5.5" rx="1" fill="#dfe4e8" stroke="#8a9096" stroke-width="0.8"/>
<rect x="2.5" y="7.5" width="11" height="2" fill="#222"/>
<path d="M3 9.5 H13 L13.5 12.3 H2.5Z" fill="#fff" stroke="#666" stroke-width="0.6"/>
</svg>
<div class="t" style="left:310px;top:499px;letter-spacing:-0.311px">Filas de impressão</div>
<svg class="a" style="left:275.0px;top:522.5px" width="6" height="9" viewBox="0 0 6 9"><path d="M1 0.7 L4.7 4.5 L1 8.3" fill="none" stroke="#7a7a7a" stroke-width="1.4"/></svg>
<svg class="a" style="left:289px;top:518px" width="16" height="16" viewBox="0 0 16 16">
<path d="M3 0.8 H6 Q8 3 10 0.8 H13 V16 H3Z" fill="#505050" stroke="#1a1a1a" stroke-width="0.8"/>
<rect x="5" y="4" width="6" height="11" fill="#6a6a6a"/>
<rect x="1.6" y="2" width="1.4" height="1" fill="#111"/><rect x="13" y="2" width="1.4" height="1" fill="#111"/><rect x="1.6" y="4" width="1.4" height="1" fill="#111"/><rect x="13" y="4" width="1.4" height="1" fill="#111"/><rect x="1.6" y="6" width="1.4" height="1" fill="#111"/><rect x="13" y="6" width="1.4" height="1" fill="#111"/><rect x="1.6" y="8" width="1.4" height="1" fill="#111"/><rect x="13" y="8" width="1.4" height="1" fill="#111"/><rect x="1.6" y="10" width="1.4" height="1" fill="#111"/><rect x="13" y="10" width="1.4" height="1" fill="#111"/><rect x="1.6" y="12" width="1.4" height="1" fill="#111"/><rect x="13" y="12" width="1.4" height="1" fill="#111"/><rect x="1.6" y="14" width="1.4" height="1" fill="#111"/><rect x="13" y="14" width="1.4" height="1" fill="#111"/>
</svg>
<div class="t" style="left:310px;top:517px;letter-spacing:-0.211px">Firmware</div>
</div></div>
<div class="a" style="left:462px;top:148px;width:294px;height:133px;background:#f9f9f9;border:1px solid #e0e0e0;border-radius:8px;box-shadow:0 3px 8px rgba(0,0,0,0.12)"></div>
<div class="a" style="left:468px;top:150px;width:282px;height:23px;background:#f0f0f0;border-radius:4px"></div>
<div class="t" style="left:500px;top:153px;letter-spacing:-0.05px">Atualizar driver</div>
<div class="t" style="left:500px;top:175px;letter-spacing:-0.05px">Desabilitar dispositivo</div>
<div class="t" style="left:500px;top:197px;letter-spacing:-0.05px">Desinstalar dispositivo</div>
<div class="t" style="left:500px;top:229px;letter-spacing:-0.23px">Verificar se há alterações de hardware</div>
<div class="a" style="left:471px;top:221px;width:276px;height:1px;background:#e0e0e0"></div>
<div class="a" style="left:471px;top:252px;width:276px;height:1px;background:#e0e0e0"></div>
<div class="t" style="left:500px;top:259px;font-weight:bold;letter-spacing:-0.3px">Propriedades</div>
</body></html>
